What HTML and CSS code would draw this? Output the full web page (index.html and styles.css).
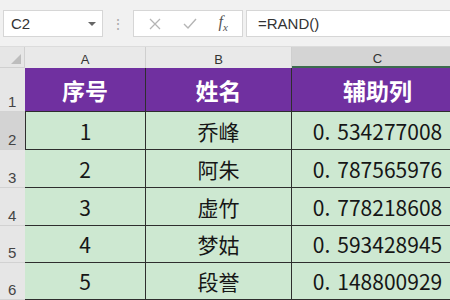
FILE: index.html
```html
<!DOCTYPE html>
<html lang="zh-CN">
<head>
    <meta charset="UTF-8">
    <title>RAND 辅助列</title>
    <link rel="stylesheet" href="styles.css">
</head>
<body>
    <div class="formula-bar">
        <div class="name-box">
            <span>C2</span>
            <span class="caret"></span>
        </div>
        <div class="grip">⋮</div>
        <div class="tool-box">
            <svg class="icon" width="14" height="14" viewBox="0 0 14 14">
                <path d="M2 2 L12 12 M12 2 L2 12" stroke="#b5b5b5" stroke-width="1.3" fill="none"/>
            </svg>
            <svg class="icon" width="16" height="14" viewBox="0 0 16 14">
                <path d="M2 7 L6 11 L14 2" stroke="#b5b5b5" stroke-width="1.4" fill="none"/>
            </svg>
            <span class="fx">f<sub>x</sub></span>
        </div>
        <div class="formula-box">=RAND()</div>
    </div>

    <div class="sheet">
        <div class="corner"><span class="corner-mark"></span></div>
        <div class="col-head">A</div>
        <div class="col-head">B</div>
        <div class="col-head active">C</div>

        <div class="row-head">1</div>
        <div class="cell title">序号</div>
        <div class="cell title">姓名</div>
        <div class="cell title">辅助列</div>

        <div class="row-head active">2</div>
        <div class="cell first">1</div>
        <div class="cell">乔峰</div>
        <div class="cell num">0<span class="dot">.</span>534277008</div>

        <div class="row-head">3</div>
        <div class="cell">2</div>
        <div class="cell">阿朱</div>
        <div class="cell num">0<span class="dot">.</span>787565976</div>

        <div class="row-head">4</div>
        <div class="cell">3</div>
        <div class="cell">虚竹</div>
        <div class="cell num">0<span class="dot">.</span>778218608</div>

        <div class="row-head">5</div>
        <div class="cell">4</div>
        <div class="cell">梦姑</div>
        <div class="cell num">0<span class="dot">.</span>593428945</div>

        <div class="row-head">6</div>
        <div class="cell">5</div>
        <div class="cell">段誉</div>
        <div class="cell num">0<span class="dot">.</span>148800929</div>
    </div>
</body>
</html>
```

FILE: styles.css
```css
* {
    margin: 0;
    padding: 0;
    box-sizing: border-box;
}

body {
    width: 450px;
    height: 300px;
    overflow: hidden;
    background: #f1f1f1;
    font-family: 'Liberation Sans', 'Noto Sans CJK SC', sans-serif;
}

/* formula bar */
.formula-bar {
    height: 47px;
    display: flex;
    align-items: center;
    padding: 1px 0 0 3px;
    border-bottom: 1px solid #dcdcdc;
}

.name-box {
    width: 100px;
    height: 27px;
    background: #fff;
    border: 1px solid #d6d6d6;
    display: flex;
    align-items: center;
    justify-content: space-between;
    padding: 0 6px 0 7px;
    font-size: 15px;
    color: #333;
}

.caret {
    width: 0;
    height: 0;
    border-left: 4px solid transparent;
    border-right: 4px solid transparent;
    border-top: 4px solid #666;
}

.grip {
    width: 30px;
    text-align: center;
    color: #aaa;
    font-size: 14px;
}

.tool-box {
    width: 110px;
    height: 27px;
    background: #fff;
    border: 1px solid #d6d6d6;
    display: flex;
    align-items: center;
    justify-content: space-around;
    padding: 0 4px;
}

.fx {
    font-family: 'Liberation Serif', serif;
    font-style: italic;
    font-size: 16px;
    color: #555;
}

.fx sub {
    font-size: 11px;
}

.formula-box {
    flex: 1;
    height: 27px;
    margin-left: 3px;
    background: #fff;
    border: 1px solid #d6d6d6;
    border-right: none;
    display: flex;
    align-items: center;
    padding-left: 11px;
    font-size: 15px;
    color: #333;
}

/* sheet grid */
.sheet {
    display: grid;
    grid-template-columns: 25px 121px 146px 172px;
    grid-template-rows: 21px 44px 38px 38px 38px 37px 37px;
    width: 464px;
}

.corner {
    background: #e6e6e6;
    border-right: 1px solid #d0d0d0;
    border-bottom: 1px solid #d0d0d0;
    position: relative;
}

.corner-mark {
    position: absolute;
    right: 3px;
    bottom: 3px;
    width: 0;
    height: 0;
    border-left: 10px solid transparent;
    border-bottom: 10px solid #bdbdbd;
}

.col-head {
    background: #e9e9e9;
    border-right: 1px solid #cfcfcf;
    font-size: 13px;
    color: #333;
    display: flex;
    align-items: center;
    justify-content: center;
    padding-top: 4px;
}

.col-head.active {
    background: #d4d4d4;
    border-bottom: 2px solid #3d6b4f;
}

.row-head {
    background: #e6e6e6;
    border-bottom: 1px solid #d2d2d2;
    font-size: 15px;
    color: #444;
    display: flex;
    align-items: flex-end;
    padding: 0 0 1px 8px;
}

.row-head.active {
    background: #d3d3d3;
}

.cell {
    background: #cde8d1;
    border-right: 1px solid #2e2e2e;
    border-bottom: 1px solid #2e2e2e;
    display: flex;
    align-items: center;
    justify-content: center;
    font-family: 'Noto Sans CJK SC', sans-serif;
    font-size: 21px;
    color: #161616;
}

.cell.first {
    border-left: 1px solid #2e2e2e;
}

.cell.title {
    background: #7030a0;
    color: #fff;
    font-weight: bold;
    font-size: 23px;
}

.cell.num {
    font-size: 21px;
}

.dot {
    margin-right: 7px;
}
```
